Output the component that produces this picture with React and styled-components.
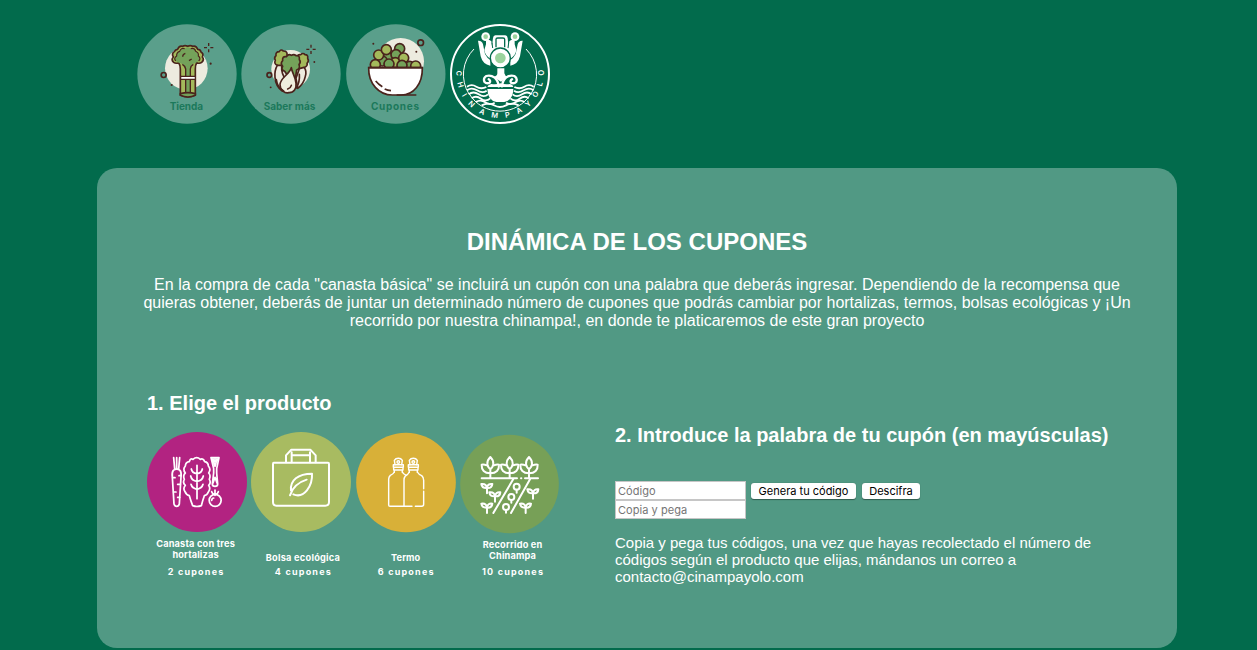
import React from "react";
import styled, { createGlobalStyle } from "styled-components";

const GlobalStyle = createGlobalStyle`
  html, body { margin: 0; padding: 0; }
  body {
    background: #026b4c;
    color: #fff;
    font-family: "Liberation Sans", Arial, sans-serif;
    overflow: hidden;
  }
`;

const Page = styled.div`
  height: 650px;
  overflow: hidden;
`;

const Nav = styled.nav`
  display: flex;
  gap: 4.33px;
  padding: 24px 0 0 137px;
  height: 144px;
  box-sizing: border-box;
  margin-bottom: 24px;
`;

const NavLink = styled.a`
  display: block;
  width: 100px;
  height: 100px;
`;

const Drawing = styled.svg`
  display: block;
  width: 100px;
  height: 100px;
  overflow: visible;
`;

const NavLabel = styled.text`
  font-family: Inter, "Noto Sans", sans-serif;
  font-weight: 700;
  font-size: 30px;
  fill: #1c795b;
`;

const LogoLetter = styled.text`
  font-family: Inter, sans-serif;
  font-weight: 600;
  font-size: 22px;
  fill: #fff;
  text-anchor: middle;
`;

const Panel = styled.main`
  box-sizing: border-box;
  width: 1080px;
  height: 480px;
  margin-left: 97px;
  border-radius: 20px;
  background: #519984;
  padding-top: 60px;
`;

const Title = styled.h1`
  margin: 0;
  font-size: 24px;
  line-height: 28px;
  text-align: center;
`;

const Intro = styled.p`
  margin: 20px 0 0;
  font-size: 16px;
  line-height: 18px;
  text-align: center;
  white-space: nowrap;
`;

const Columns = styled.div`
  display: flex;
  padding-left: 50px;
  margin-top: 61px;
`;

const ProductColumn = styled.section`
  width: 468px;
`;

const CouponColumn = styled.section`
  padding-top: 32px;
`;

const Heading = styled.h2`
  margin: 0;
  font-size: 20px;
  line-height: 24px;
  white-space: nowrap;
`;

const Products = styled.div`
  display: flex;
  gap: 4.33px;
  margin-top: 17px;
`;

const Product = styled.figure`
  margin: 0;
  width: 100px;
  display: flex;
  flex-direction: column;
  align-items: center;
`;

const Caption = styled.figcaption`
  display: flex;
  flex-direction: column;
  justify-content: flex-end;
  align-items: center;
  box-sizing: border-box;
  height: 31px;
  padding-bottom: ${(p) => p.$lift || 0}px;
  font: 700 9.2px/11px "Inter", sans-serif;
  white-space: nowrap;
  margin-left: ${(p) => p.$shift || 0}px;
`;

const CaptionLine = styled.span`
  letter-spacing: ${(p) => p.$tracking}px;
  margin-right: -${(p) => p.$tracking}px;
`;

const Price = styled(CaptionLine)`
  margin-top: 3px;
  font: 700 9px/11px "Inter", sans-serif;
  margin-left: ${(p) => p.$shift || 0}px;
`;

const Form = styled.form`
  margin-top: 34px;
  display: flex;
  align-items: flex-start;
`;

const Fields = styled.div`
  display: flex;
  flex-direction: column;
  margin-right: 5px;
`;

const Field = styled.input`
  box-sizing: border-box;
  width: 131px;
  height: 19px;
  margin: 0;
  padding: 1px 2px 0;
  border: 1px solid #c6c6c6;
  border-radius: 0;
  background: #fff;
  font: 11px "Inter", sans-serif;
  letter-spacing: 0.05px;
  &::placeholder { color: #757575; opacity: 1; }
`;

const Button = styled.button`
  box-sizing: border-box;
  width: ${(p) => p.$width}px;
  height: 16px;
  margin: 2px 6px 0 0;
  padding: 0;
  border: 0;
  border-radius: 3px;
  background: #fff;
  color: #000;
  box-shadow: 0 0.5px 1px rgba(0, 0, 0, 0.4);
  font: 11px/16px "Inter", sans-serif;
  white-space: nowrap;
`;

const Note = styled.p`
  margin: 15px 0 0;
  font-size: 15px;
  line-height: 17px;
  white-space: nowrap;
`;

const brown = "#4a231c";

function Sparkle({ x, y }) {
  return (
    <path
      d={`M${x} ${y - 14}v9 M${x} ${y + 5}v9 M${x - 14} ${y}h9 M${x + 5} ${y}h9`}
      stroke={brown}
      strokeWidth="4"
      fill="none"
    />
  );
}

function StoreBadge() {
  return (
    <Drawing viewBox="21 27 300 300">
      <circle cx="171" cy="177" r="149" fill="#5a9f8b" />
      <circle cx="169" cy="160" r="64" fill="#edebdf" />
      <g stroke={brown} strokeWidth="5" strokeLinejoin="round">
        <path
          d="M151 240V162Q151 150 146 143Q137 147 131 142Q122 134 130 126Q124 116 133 110Q136 103 143 103Q147 91 158 94Q165 90 173 94Q181 90 188 94Q199 91 203 103Q211 103 213 111Q222 116 217 126Q224 134 215 142Q209 147 200 143Q196 150 196 162V240Q174 251 151 240Z"
          fill="#a4b95b"
        />
        <path
          d="M166 238V164Q165 152 155 146Q146 144 137 138Q130 129 140 123Q139 112 149 109Q153 97 164 101Q173 93 182 101Q194 98 197 109Q207 113 205 123Q214 130 206 138Q198 144 190 146Q181 152 181 164V238Z"
          fill="#74a25a"
          stroke="none"
        />
        <path d="M167 238V162Q165 152 157 148M181 238V162Q182 152 190 148" fill="none" strokeWidth="4" />
        <path d="M137 138Q130 129 140 123Q139 112 149 109Q153 97 164 101M182 101Q194 98 197 109Q207 113 205 123Q214 130 206 138" fill="none" strokeWidth="3.5" />
        <rect x="152" y="184" width="44" height="9" fill="#fff" strokeWidth="3.5" />
        <path d="M151 236Q174 230 196 236V241Q174 251 151 241Z" fill="#74a25a" />
        <path d="M158 125q0-7 8-10 M177 137l8-5" fill="none" strokeWidth="4" />
        <circle cx="101" cy="180" r="7.5" fill="none" />
      </g>
      <circle cx="125" cy="210" r="3.2" fill={brown} />
      <circle cx="242" cy="146" r="3.2" fill={brown} />
      <Sparkle x={236} y={98} />
      <NavLabel x="119" y="286" textLength="100">Tienda</NavLabel>
    </Drawing>
  );
}

function LearnBadge() {
  return (
    <Drawing viewBox="15 27 300 300">
      <circle cx="165" cy="177" r="149" fill="#5a9f8b" />
      <circle cx="164" cy="163" r="58" fill="#edebdf" />
      <g stroke={brown} strokeWidth="5" strokeLinejoin="round" strokeLinecap="round">
        <path
          d="M124 151 Q113 146 118 136 Q113 128 120 122 Q118 110 130 110 Q134 101 142 108 Q155 108 153 120 Q160 127 151 137 L139 170Z"
          fill="#a4b95b"
        />
        <path
          d="M184 127 Q185 117 194 119 Q201 112 207 119 Q217 119 215 130 Q220 138 213 145 Q216 153 204 158 L190 177Z"
          fill="#a4b95b"
        />
        <path d="M124 151 Q115 166 117 187 Q119 214 139 228 L151 196 Q135 177 137 151Z" fill="#edebdf" />
        <path d="M204 157 Q213 168 208 184 Q203 207 185 220 L180 190 L190 161Z" fill="#edebdf" />
        <path
          d="M146 169 Q134 164 140 154 Q132 145 140 137 Q138 123 151 125 Q157 116 166 121 Q174 116 180 122 Q192 120 190 134 Q196 141 189 149 Q194 160 182 165 L178 190 L160 190Z"
          fill="#74a25a"
        />
        <path
          d="M166 158 C159 180 133 188 132 209 C132 226 147 236 158 233 C174 234 182 220 180 205 C179 184 168 175 166 158Z"
          fill="#f0eedf"
        />
        <path d="M143 228 Q124 219 121 194 M181 219 Q192 200 190 178 M155 222Q164 219 166 211" fill="none" />
        <circle cx="100" cy="180" r="7" fill="none" />
      </g>
      <circle cx="104" cy="217" r="2.8" fill={brown} />
      <circle cx="235" cy="141" r="2.8" fill={brown} />
      <Sparkle x={225} y={103} />
      <NavLabel x="83" y="286" textLength="155">Saber más</NavLabel>
    </Drawing>
  );
}

const peas = [
  [138, 127, 1], [121, 138, 1], [110, 120, 0], [133, 104, 0], [173, 101, 1],
  [162, 119, 1], [160, 143, 0], [185, 129, 0], [203, 154, 1],
  [100, 149, 0], [221, 153, 0], [141, 147, 1], [180, 151, 1],
];

function CouponsBadge() {
  return (
    <Drawing viewBox="12 27 300 300">
      <circle cx="161.5" cy="177" r="149" fill="#5a9f8b" />
      <circle cx="176" cy="139" r="70" fill="#edebdf" />
      <g stroke={brown} strokeWidth="5">
        {peas.map(([x, y, dark]) => (
          <circle key={`${x}-${y}`} cx={x} cy={y} r="15" fill={dark ? "#74a25a" : "#a4b95b"} />
        ))}
        <path d="M80 158H241C242 209 213 240 178 240H151C111 240 79 206 80 158Z" fill="#fff" />
        <path d="M80 158H241M164 240H223" fill="none" strokeWidth="5" />
        <path d="M101 198Q109 208 121 215M128 222Q137 226 147 227" fill="none" strokeWidth="5" />
        <circle cx="236" cy="83" r="8.5" fill="none" strokeWidth="5" />
      </g>
      <circle cx="94" cy="86" r="3" fill={brown} />
      <circle cx="223" cy="110" r="3" fill={brown} />
      <NavLabel x="87" y="284" textLength="144">Cupones</NavLabel>
    </Drawing>
  );
}

const logoLetters = [
  ["C", 42, 166, 92], ["H", 47, 200, 74], ["I", 59, 231, 60], ["N", 80, 258, 43],
  ["A", 112, 281, 26], ["M", 149, 291, 8], ["P", 187, 290, -10], ["A", 222, 277, -29],
  ["Y", 249, 257, -44], ["O", 271, 229, -61], ["L", 284, 198, -75], ["O", 289, 164, -90],
];

function Logo() {
  return (
    <Drawing viewBox="15 18 300 300">
      <circle cx="165" cy="168" r="147" fill="none" stroke="#fff" strokeWidth="6" />
      <path d="M87 93A109 109 0 0 0 72 228M243 93A109 109 0 0 1 258 228" stroke="#fff" strokeWidth="3" fill="none" />
      <path d="M73 228A108 108 0 0 0 257 228" stroke="#fff" strokeWidth="3" fill="none" />
      <g fill="#fff">
        <path d="M151 52H181Q187 53 188 60L192 100H139L144 60Q145 53 151 52Z" />
        <path d="M99 68Q111 67 114 79L120 108Q126 120 136 126V143Q113 139 107 115Z" />
        <path d="M233 68Q221 67 218 79L212 108Q206 120 196 126V143Q219 139 225 115Z" />
        <path d="M123 79V68Q132 61 139 70L143 98L136 122Q121 114 118 96Z" />
        <path d="M209 79V68Q200 61 193 70L189 98L196 122Q211 114 214 96Z" />
        <circle cx="122" cy="56" r="13" />
        <circle cx="210" cy="56" r="13" />
      </g>
      <path d="M153 88V64Q153 60 158 60H174Q179 60 179 64V88" fill="none" stroke="#026b4c" strokeWidth="4" />
      <path d="M141 74L143 90M191 74L189 90" fill="none" stroke="#026b4c" strokeWidth="3" />
      <circle cx="166" cy="120" r="30" fill="#fff" stroke="#026b4c" strokeWidth="4" />
      <g fill="#9bd39d">
        <circle cx="122" cy="56" r="7" />
        <circle cx="210" cy="56" r="7" />
        <circle cx="166" cy="120" r="16" />
      </g>
      <g fill="#fff">
        <path d="M157 151H178V166Q180 174 188 177L168 191L146 177Q157 174 157 166Z" />
        <path d="M127 207Q129 200 139 198Q155 200 167 196Q179 200 195 198Q204 200 205 207Z" />
        <path d="M127 213H205Q204 247 178 252H154Q128 247 127 213Z" />
      </g>
      <g fill="none" stroke="#fff" strokeWidth="7" strokeLinecap="round">
        <path d="M161 205Q159 187 149 179Q137 170 124 174Q114 180 118 191Q125 199 134 194Q138 188 131 184" />
        <path d="M171 205Q173 187 183 179Q195 170 208 174Q218 180 214 191Q207 199 198 194Q194 188 201 184" />
      </g>
      <g fill="none" stroke="#fff" strokeWidth="5.5">
        <path d="M66 206Q80 197 94 206T124 207" />
        <path d="M66 217Q80 207 96 217T125 218" />
        <path d="M71 229Q85 218 101 229T129 229" />
        <path d="M80 241Q93 231 108 242T136 241" />
        <path d="M92 252Q107 243 121 253T149 254" />
        <path d="M266 206Q252 197 238 206T208 207" />
        <path d="M266 217Q252 207 236 217T207 218" />
        <path d="M260 229Q247 218 231 229T203 229" />
        <path d="M251 241Q239 231 224 242T196 241" />
        <path d="M239 252Q225 243 211 253T183 254" />
        <path d="M110 262Q130 252 147 262T183 262T221 262" />
      </g>
      {logoLetters.map(([letter, x, y, angle], index) => (
        <LogoLetter key={index} transform={`translate(${x} ${y}) rotate(${angle})`} y="8">
          {letter}
        </LogoLetter>
      ))}
    </Drawing>
  );
}

const lineArt = { fill: "none", stroke: "#fff", strokeLinecap: "round", strokeLinejoin: "round" };

function BasketBadge() {
  return (
    <Drawing viewBox="15 21 300 300">
      <circle cx="165" cy="171" r="150" fill="#b22381" />
      <g {...lineArt} strokeWidth="5.2">
        <path d="M95 98L98 132M104 98V130M113 98L110 132" />
        <path d="M94 136Q104 128 114 136Q119 142 117 156L112 237Q110 244 104 244Q98 244 96 237L91 156Q89 142 94 136Z" />
        <path d="M92 158H99M111 152H117M107 178H115M95 201H102M107 217H113" />
        <path d="M152 242Q146 226 142 212Q133 210 129 200Q122 191 130 181Q121 173 127 163Q122 151 130 144Q121 133 130 123Q131 111 142 110Q144 99 153 103Q164 93 175 103Q184 99 188 110Q199 112 199 123Q208 133 200 144Q207 151 202 163Q208 173 200 181Q207 191 199 201Q195 211 187 212Q182 226 178 242Q165 247 152 242Z" />
        <path d="M165 121V221M148 132Q150 144 165 146Q179 144 181 132M146 153Q149 167 165 169Q181 167 184 153M147 178Q150 190 165 193Q180 190 183 178" />
        <path d="M207 98H231L224 131V144L227 177Q227 184 219 184Q211 184 211 177L215 144V131L207 98M213 102L219 124L225 102M219 99V109M213 174L219 157L225 174" />
        <circle cx="219.5" cy="226" r="18" />
        <path d="M219 195V211M209 200Q211 207 218 209M229 200Q227 207 220 209M209 226Q210 219 215 219" />
      </g>
    </Drawing>
  );
}

function BagBadge() {
  return (
    <Drawing viewBox="9 21 300 300">
      <circle cx="159" cy="171" r="150" fill="#a8bb61" />
      <g {...lineArt} strokeWidth="6">
        <path d="M77 113H240Q243 113 243 117V231Q243 242 232 242H85Q75 242 75 231V117Q75 113 77 113Z" />
        <path d="M114 112V91L130 74H187L203 91V112M131 112V82M186 112V82M131 91H186" />
        <path d="M129 196C126 166 150 146 192 146C194 183 168 222 136 208M126 211Q137 176 176 164" />
      </g>
    </Drawing>
  );
}

function Bottle({ x }) {
  return (
    <g transform={`translate(${x} 0)`}>
      <path d="M-10 119L-12 106Q-8 100 0 100Q8 100 12 106L10 119M-4 111A4 4 0 1 1 4 111A4 4 0 1 1-4 111" />
      <path d="M-15 119H15V127H-15ZM-14 128V135H14V128M-12 136V142M12 136V142" />
    </g>
  );
}

function BottleBadge() {
  return (
    <Drawing viewBox="12 21 300 300">
      <circle cx="162" cy="172.5" r="149.5" fill="#d8b038" />
      <g {...lineArt} strokeWidth="4.3">
        <Bottle x={139} />
        <Bottle x={184} />
        <path d="M127 141Q124 147 115 151Q110 155 110 163V240Q110 244 114 244H180M151 141Q154 148 163 151" />
        <path d="M172 141Q168 149 160 153Q156 158 156 165V244M196 141Q200 148 209 152Q215 157 215 166V191M215 199V238Q215 244 209 244H190" />
      </g>
    </Drawing>
  );
}

function Plant({ x }) {
  return (
    <g transform={`translate(${x} 0)`}>
      <path d="M0 96Q-10 106-9 118Q-6 130 0 132Q6 130 9 118Q10 106 0 96ZM0 134V158M-11 121Q-18 118-26 119Q-27 144 0 145Q27 144 26 119Q18 118 11 121" />
    </g>
  );
}

function Sprout({ x, y }) {
  return (
    <path d={`M${x} ${y}Q${x - 2} ${y - 14} ${x - 17} ${y - 12}Q${x - 15} ${y + 1} ${x} ${y}Q${x + 15} ${y + 1} ${x + 16} ${y - 12}Q${x + 2} ${y - 14} ${x} ${y}V${y + 16}`} />
  );
}

function FieldBadge() {
  return (
    <Drawing viewBox="12 21 300 300">
      <circle cx="160.5" cy="177" r="148" fill="#77a057" />
      <g {...lineArt} strokeWidth="6">
        <Plant x={103} />
        <Plant x={161} />
        <Plant x={219} />
        <path d="M77 160H183M195 160H196M207 160H246M172 162L112 264M222 163L165 264" />
        <Sprout x={93} y={189} />
        <Sprout x={117} y={214} />
        <Sprout x={93} y={248} />
        <Sprout x={231} y={205} />
        <Sprout x={209} y={248} />
        <circle cx="182" cy="185" r="9" />
        <circle cx="166" cy="216" r="9" />
        <circle cx="150" cy="246" r="9" />
        <path d="M182 194V203M166 225V233M150 255V263" />
      </g>
    </Drawing>
  );
}

const products = [
  { Icon: BasketBadge, lines: [["Canasta con tres", 0.2], ["hortalizas", 0.15]], price: "2 cupones", shift: -3, lift: 3 },
  { Icon: BagBadge, lines: [["Bolsa ecológica", 0.25]], price: "4 cupones", shift: 3, lift: 0 },
  { Icon: BottleBadge, lines: [["Termo", 0.1]], price: "6 cupones", shift: 0, lift: 0 },
  { Icon: FieldBadge, lines: [["Recorrido en", 0.2], ["Chinampa", 0.15]], price: "10 cupones", shift: 5, lift: 2 },
];

export default function App() {
  return (
    <Page>
      <GlobalStyle />
      <Nav>
        <NavLink><StoreBadge /></NavLink>
        <NavLink><LearnBadge /></NavLink>
        <NavLink><CouponsBadge /></NavLink>
        <NavLink><Logo /></NavLink>
      </Nav>
      <Panel>
        <Title>DINÁMICA DE LOS CUPONES</Title>
        <Intro>
          En la compra de cada "canasta básica" se incluirá un cupón con una palabra que deberás ingresar. Dependiendo de la recompensa que
          <br />
          quieras obtener, deberás de juntar un determinado número de cupones que podrás cambiar por hortalizas, termos, bolsas ecológicas y ¡Un
          <br />
          recorrido por nuestra chinampa!, en donde te platicaremos de este gran proyecto
        </Intro>
        <Columns>
          <ProductColumn>
            <Heading>1. Elige el producto</Heading>
            <Products>
              {products.map(({ Icon, lines, price, shift, lift }) => (
                <Product key={price}>
                  <Icon />
                  <Caption $shift={shift} $lift={lift}>
                    {lines.map(([text, tracking]) => (
                      <CaptionLine key={text} $tracking={tracking}>{text}</CaptionLine>
                    ))}
                  </Caption>
                  <Price $tracking={1.2} $shift={shift}>{price}</Price>
                </Product>
              ))}
            </Products>
          </ProductColumn>
          <CouponColumn>
            <Heading>2. Introduce la palabra de tu cupón (en mayúsculas)</Heading>
            <Form onSubmit={(event) => event.preventDefault()}>
              <Fields>
                <Field placeholder="Código" />
                <Field placeholder="Copia y pega" />
              </Fields>
              <Button type="button" $width={105}>Genera tu código</Button>
              <Button type="button" $width={58}>Descifra</Button>
            </Form>
            <Note>
              Copia y pega tus códigos, una vez que hayas recolectado el número de
              <br />
              códigos según el producto que elijas, mándanos un correo a
              <br />
              contacto@cinampayolo.com
            </Note>
          </CouponColumn>
        </Columns>
      </Panel>
    </Page>
  );
}
